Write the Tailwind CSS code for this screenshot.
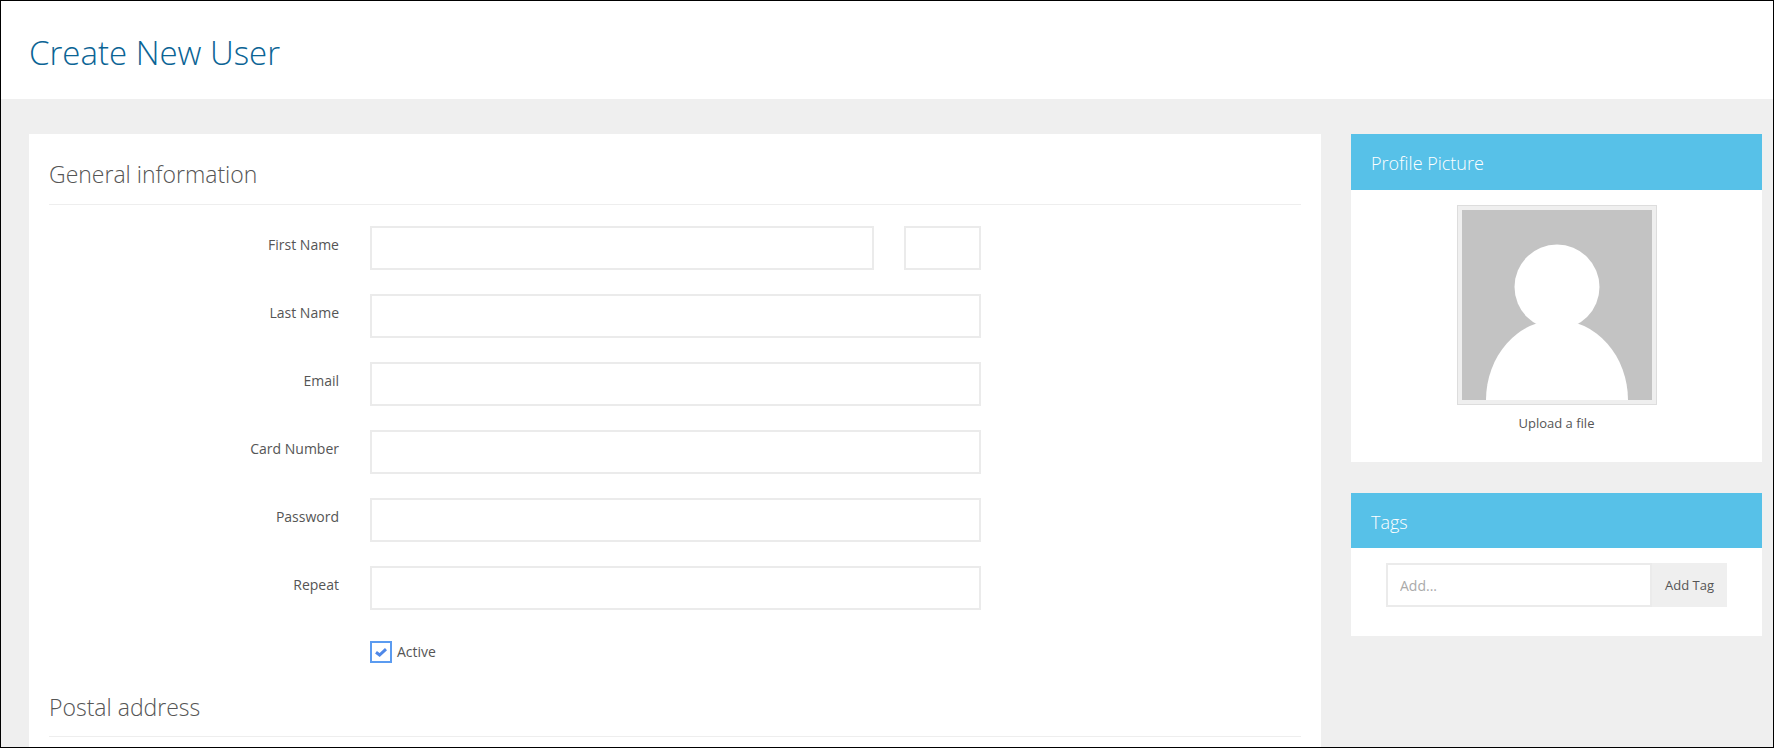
<!DOCTYPE html>
<html lang="en">
<head>
  <meta charset="UTF-8" />
  <title>Create New User</title>
  <script src="https://cdn.jsdelivr.net/npm/@tailwindcss/browser@4"></script>
</head>
<body class="bg-[#efefef] text-[#555] font-['Open_Sans',sans-serif] text-sm">
  <div class="h-[748px] overflow-hidden border border-black flex flex-col">

    <header class="bg-white h-[98px] shrink-0 pl-[28px] pt-[29px]">
      <h1 class="text-[33px] leading-[46px] font-light text-[#0b6495]">Create New User</h1>
    </header>

    <div class="flex gap-[30px] pl-[28px] pr-[11px] pt-[35px]">

      <!-- Main form -->
      <main class="bg-white w-[1292px] shrink-0 px-[20px] pt-[25px] h-[700px]">
        <h2 class="text-[23px] leading-[30px] font-light text-[#555]">General information</h2>
        <div class="h-px bg-[#eee] mt-[15px] mb-[21px]"></div>

        <div class="flex flex-col gap-[24px]">
          <div class="flex">
            <label class="w-[290px] mr-[31px] pt-[9px] leading-5 text-right">First Name</label>
            <input type="text" class="w-[504px] h-[44px] border-2 border-[#ebebeb] bg-white px-3" />
            <input type="text" class="w-[77px] h-[44px] ml-[30px] border-2 border-[#ebebeb] bg-white px-3" />
          </div>
          <div class="flex">
            <label class="w-[290px] mr-[31px] pt-[9px] leading-5 text-right">Last Name</label>
            <input type="text" class="w-[611px] h-[44px] border-2 border-[#ebebeb] bg-white px-3" />
          </div>
          <div class="flex">
            <label class="w-[290px] mr-[31px] pt-[9px] leading-5 text-right">Email</label>
            <input type="text" class="w-[611px] h-[44px] border-2 border-[#ebebeb] bg-white px-3" />
          </div>
          <div class="flex">
            <label class="w-[290px] mr-[31px] pt-[9px] leading-5 text-right">Card Number</label>
            <input type="text" class="w-[611px] h-[44px] border-2 border-[#ebebeb] bg-white px-3" />
          </div>
          <div class="flex">
            <label class="w-[290px] mr-[31px] pt-[9px] leading-5 text-right">Password</label>
            <input type="password" class="w-[611px] h-[44px] border-2 border-[#ebebeb] bg-white px-3" />
          </div>
          <div class="flex">
            <label class="w-[290px] mr-[31px] pt-[9px] leading-5 text-right">Repeat</label>
            <input type="password" class="w-[611px] h-[44px] border-2 border-[#ebebeb] bg-white px-3" />
          </div>
        </div>

        <div class="flex items-center ml-[321px] mt-[31px]">
          <span class="w-[22px] h-[22px] border-2 border-[#5b9bf0] flex items-center justify-center">
            <svg class="w-[12px] h-[9px] mt-[1px]" viewBox="0 0 12 9"><path d="M1 4.2 L4.6 7 L11 1.2" fill="none" stroke="#4f88e8" stroke-width="3"/></svg>
          </span>
          <span class="ml-[5px]">Active</span>
        </div>

        <h2 class="text-[23px] leading-[30px] font-light text-[#555] mt-[29px]">Postal address</h2>
        <div class="h-px bg-[#eee] mt-[14px]"></div>
      </main>

      <!-- Sidebar -->
      <aside class="w-[411px] shrink-0 flex flex-col gap-[31px]">
        <section class="bg-white h-[328px]">
          <h3 class="bg-[#57c1e8] h-[56px] pl-[20px] text-white text-[18px] font-light leading-[59px]">Profile Picture</h3>
          <div class="flex flex-col items-center pt-[15px]">
            <div class="w-[200px] h-[200px] border border-[#ddd] bg-[#efefef] p-[4px]">
              <svg class="block w-[190px] h-[190px]" viewBox="0 0 190 190">
                <rect width="190" height="190" fill="#c3c3c3"/>
                <ellipse cx="95" cy="190" rx="71" ry="80" fill="#fff"/>
                <circle cx="95" cy="77" r="42.5" fill="#fff"/>
              </svg>
            </div>
            <a class="mt-[9px] text-[13px] leading-[18px]">Upload a file</a>
          </div>
        </section>

        <section class="bg-white h-[143px]">
          <h3 class="bg-[#57c1e8] h-[55px] pl-[20px] text-white text-[18px] font-light leading-[59px]">Tags</h3>
          <div class="flex ml-[35px] mt-[15px] w-[341px]">
            <input type="text" placeholder="Add..." class="w-[266px] h-[44px] border-2 border-[#ebebeb] bg-white pl-[12px] placeholder:text-[#aaa]" />
            <button class="flex-1 h-[44px] bg-[#efefef] text-[13px] text-[#555]">Add Tag</button>
          </div>
        </section>
      </aside>
    </div>
  </div>
</body>
</html>
